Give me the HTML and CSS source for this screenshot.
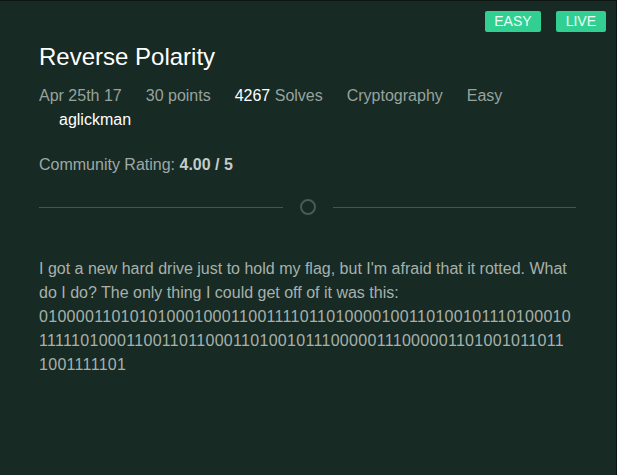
FILE: index.html
```html
<!DOCTYPE html>
<html>
<head>
<meta charset="utf-8">
<link rel="stylesheet" href="styles.css">
</head>
<body>
<div class="card">
  <div class="badges">
    <span class="badge">EASY</span>
    <span class="badge badge-live">LIVE</span>
  </div>
  <h1 class="title">Reverse Polarity</h1>
  <div class="meta">
    <span class="meta-item">Apr 25th 17</span>
    <span class="meta-item">30 points</span>
    <span class="meta-item"><span class="strong">4267</span> Solves</span>
    <span class="meta-item">Cryptography</span>
    <span class="meta-item">Easy</span>
    <span class="meta-item author">aglickman</span>
  </div>
  <div class="rating">Community Rating: <b>4.00 / 5</b></div>
  <div class="divider">
    <span class="rule"></span>
    <span class="ring"></span>
    <span class="rule"></span>
  </div>
  <div class="desc">
    <p class="line">I got a new hard drive just to hold my flag, but I'm afraid that it rotted. What do I do? The only thing I could get off of it was this:</p>
    <p class="bits">01000011010101000100011001111011010000100110100101110100010<br>11111010001100110110001101001011100000111000001101001011011<br>1001111101</p>
  </div>
</div>
</body>
</html>
```

FILE: styles.css
```css
html, body {
  margin: 0;
  padding: 0;
  height: 100%;
}
body {
  background: #172a24;
  font-family: "Liberation Sans", Arial, sans-serif;
}
.card {
  position: relative;
  box-sizing: border-box;
  min-height: 100%;
  border-top: 1px solid #0d1613;
  border-right: 1px solid #0d1613;
  padding: 42px 40px 0 39px;
}
.badges {
  position: absolute;
  top: 10px;
  right: 10px;
  display: flex;
  gap: 15px;
}
.badge {
  display: block;
  background: #31d092;
  color: #eafff5;
  font-size: 14px;
  line-height: 21px;
  height: 21px;
  padding: 0 9px;
  border-radius: 2px;
}
.badge-live {
  padding: 0 10px;
}
.title {
  margin: 0;
  font-size: 24px;
  font-weight: normal;
  line-height: 28px;
  color: #ffffff;
}
.meta {
  margin-top: 13px;
  display: flex;
  flex-wrap: wrap;
  column-gap: 24px;
  font-size: 16px;
  line-height: 24px;
  color: #97a39e;
  width: 537px;
}
.strong {
  color: #ffffff;
}
.author {
  margin-left: 20px;
  color: #ffffff;
}
.rating {
  margin-top: 21px;
  font-size: 16px;
  line-height: 24px;
  color: #9ea9a4;
}
.rating b {
  color: #c4ccc8;
}
.divider {
  margin-top: 22px;
  width: 537px;
  display: flex;
  align-items: center;
  height: 16px;
}
.rule {
  flex: 1;
  height: 1px;
  background: #46564f;
}
.ring {
  width: 12px;
  height: 12px;
  border: 2px solid #4b5a55;
  border-radius: 50%;
  margin: 0 17px;
}
.desc {
  margin-top: 42px;
  width: 532px;
  font-size: 16px;
  line-height: 24px;
  color: #a7b1ac;
}
.line, .bits {
  margin: 0;
}
.bits {
  white-space: nowrap;
  letter-spacing: 0.3px;
}
```
